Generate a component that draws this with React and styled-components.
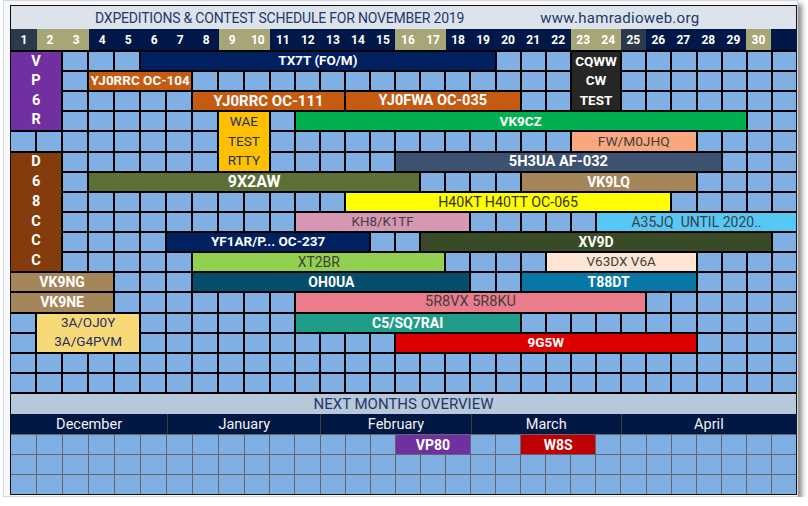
import React from 'react';
import styled, { createGlobalStyle } from 'styled-components';

const GlobalStyle = createGlobalStyle`
  html, body {
    margin: 0;
    padding: 0;
    background: #ffffff;
  }
  body {
    font-family: Roboto, "Liberation Sans", sans-serif;
  }
`;

// 9 wider day columns, then 22 narrower ones (as in the original sheet)
const COLS = 'repeat(9, 26fr) repeat(22, 25fr)';
const ROWS = 17;

const Card = styled.div`
  width: 795px;
  height: 497px;
  margin-left: 3px;
  box-sizing: border-box;
  padding: 4px 0 0 6px;
  background: #f6f7fb;
  border: 1px solid #d4d8e0;
  box-shadow: 4px 4px 5px rgba(0, 0, 0, 0.45);
`;

const Table = styled.div`
  width: 785px;
  display: flex;
  flex-direction: column;
  border: 1px solid #111;
`;

const TitleBar = styled.div`
  height: 23px;
  display: flex;
  align-items: center;
  gap: 76px;
  padding-left: 84px;
  background: #dce3eb;
  color: #1f386a;
`;

const Title = styled.span`
  font-size: 14px;
  letter-spacing: -0.2px;
`;

const Url = styled.span`
  font-size: 15px;
  letter-spacing: 0.3px;
`;

const DayHeader = styled.div`
  display: grid;
  grid-template-columns: ${COLS};
  height: 21px;
`;

const dayBg = { week: '#001848', weekend: '#a7a677', slate: '#2a394b' };

const DayCell = styled.div`
  display: flex;
  align-items: center;
  justify-content: center;
  background: ${({ $kind }) => dayBg[$kind]};
  color: #fff;
  font-size: 12px;
  font-weight: 700;
`;

const Schedule = styled.div`
  display: grid;
  grid-template-columns: ${COLS};
  grid-template-rows: repeat(${ROWS}, 1fr);
  gap: 2px;
  padding: 2px 0;
  height: 344px;
  box-sizing: border-box;
  background: #000;
`;

const Cell = styled.div`
  background: #80b0e3;
`;

const Event = styled.div`
  grid-column: ${({ $col }) => $col} / span ${({ $span }) => $span};
  grid-row: ${({ $row }) => $row} / span ${({ $rows }) => $rows || 1};
  display: grid;
  grid-auto-rows: 1fr;
  align-items: center;
  justify-items: center;
  background: ${({ $bg }) => $bg};
  color: ${({ $fg }) => $fg || '#fff'};
  font-size: ${({ $size }) => $size || 14}px;
  font-weight: ${({ $fg }) => ($fg ? 400 : 700)};
  white-space: pre;
  line-height: 1;
  overflow: hidden;
`;

const BandTitle = styled.div`
  height: 20px;
  display: flex;
  align-items: center;
  justify-content: center;
  background: #b8c7d9;
  color: #1f386a;
  font-size: 15px;
`;

const MonthHeader = styled.div`
  display: grid;
  grid-template-columns: ${COLS};
  height: 20px;
  background: #001843;
`;

const Month = styled.div`
  grid-column: span ${({ $span }) => $span};
  display: flex;
  align-items: center;
  justify-content: center;
  color: #f2f2f2;
  font-size: 14.5px;
  border-left: ${({ $first }) => ($first ? 'none' : '1px solid #3a3a3a')};
`;

const Overview = styled.div`
  display: grid;
  grid-template-columns: ${COLS};
  grid-template-rows: repeat(3, 19px);
  gap: 1px;
  padding-top: 1px;
  background: #666;
`;

const days = Array.from({ length: 31 }, (_, i) => {
  const d = i + 1;
  let kind = 'week';
  if ([2, 3, 9, 10, 16, 17, 23, 24, 30].includes(d)) kind = 'weekend';
  if (d === 1 || d === 25) kind = 'slate';
  return { d, kind, label: d <= 30 ? String(d) : '' };
});

const NAVY_TEXT = '#1f3060';
const GREY_TEXT = '#404040';

const events = [
  { row: 1, rows: 4, col: 1, span: 2, bg: '#7030a0', lines: ['V', 'P', '6', 'R'], size: 14.5 },
  { row: 6, rows: 6, col: 1, span: 2, bg: '#843c0c', lines: ['D', '6', '8', 'C', 'C', 'C'], size: 14.5 },
  { row: 12, col: 1, span: 4, bg: '#a5855a', lines: ['VK9NG'] },
  { row: 13, col: 1, span: 4, bg: '#a5855a', lines: ['VK9NE'] },
  { row: 14, rows: 2, col: 2, span: 4, bg: '#f7d978', fg: NAVY_TEXT, lines: ['3A/OJ0Y', '3A/G4PVM'], size: 13.5 },
  { row: 1, col: 6, span: 14, bg: '#002060', lines: ['TX7T (FO/M)'], size: 13.5 },
  { row: 1, rows: 3, col: 23, span: 2, bg: '#262626', lines: ['CQWW', 'CW', 'TEST'], size: 13.5 },
  { row: 2, col: 4, span: 4, bg: '#c55a11', lines: ['YJ0RRC OC-104'], size: 13.5 },
  { row: 3, col: 8, span: 6, bg: '#c55a11', lines: ['YJ0RRC OC-111'], size: 15 },
  { row: 3, col: 14, span: 7, bg: '#c55a11', lines: ['YJ0FWA OC-035'], size: 14.5 },
  { row: 4, rows: 3, col: 9, span: 2, bg: '#ffc000', fg: NAVY_TEXT, lines: ['WAE', 'TEST', 'RTTY'], size: 13.5 },
  { row: 4, col: 12, span: 18, bg: '#00b050', lines: ['VK9CZ'], size: 13.5 },
  { row: 5, col: 23, span: 5, bg: '#f8a77e', fg: GREY_TEXT, lines: ['FW/M0JHQ'], size: 13.7 },
  { row: 6, col: 16, span: 13, bg: '#3d5270', lines: ['5H3UA AF-032'], size: 14.7 },
  { row: 7, col: 4, span: 13, bg: '#5b6f37', lines: ['9X2AW'], size: 16 },
  { row: 7, col: 21, span: 7, bg: '#a5855a', lines: ['VK9LQ'] },
  { row: 8, col: 14, span: 13, bg: '#ffff00', fg: '#333', lines: ['H40KT H40TT OC-065'], size: 14.2 },
  { row: 9, col: 12, span: 7, bg: '#d597b1', fg: GREY_TEXT, lines: ['KH8/K1TF'], size: 13.3 },
  { row: 9, col: 24, span: 8, bg: '#56c8f6', fg: GREY_TEXT, lines: ['A35JQ  UNTIL 2020..'] },
  { row: 10, col: 7, span: 8, bg: '#002060', lines: ['YF1AR/P... OC-237'], size: 13.5 },
  { row: 10, col: 17, span: 14, bg: '#384a26', lines: ['XV9D'] },
  { row: 11, col: 8, span: 10, bg: '#92d050', fg: GREY_TEXT, lines: ['XT2BR'] },
  { row: 11, col: 22, span: 6, bg: '#fde4d3', fg: GREY_TEXT, lines: ['V63DX V6A'], size: 13.5 },
  { row: 12, col: 8, span: 11, bg: '#064d6b', lines: ['OH0UA'] },
  { row: 12, col: 21, span: 7, bg: '#0777a6', lines: ['T88DT'] },
  { row: 13, col: 12, span: 14, bg: '#ea7c8c', fg: GREY_TEXT, lines: ['5R8VX 5R8KU'], size: 14.5 },
  { row: 14, col: 12, span: 9, bg: '#1f9d88', lines: ['C5/SQ7RAI'] },
  { row: 15, col: 16, span: 12, bg: '#dd0000', lines: ['9G5W'], size: 13.5 },
];

const months = [
  { name: 'December', span: 6 },
  { name: 'January', span: 6 },
  { name: 'February', span: 6 },
  { name: 'March', span: 6 },
  { name: 'April', span: 7 },
];

const outlook = [
  { row: 1, col: 16, span: 3, bg: '#7030a0', lines: ['VP80'] },
  { row: 1, col: 21, span: 3, bg: '#c00000', lines: ['W8S'] },
];

// blue cells fill whatever the events leave free (auto placement)
const freeCells = (list, rows) =>
  31 * rows - list.reduce((n, e) => n + e.span * (e.rows || 1), 0);

const renderEvent = (e, i) => (
  <Event
    key={i}
    $row={e.row}
    $rows={e.rows}
    $col={e.col}
    $span={e.span}
    $bg={e.bg}
    $fg={e.fg}
    $size={e.size}
  >
    {e.lines.map((l, j) => (
      <span key={j}>{l}</span>
    ))}
  </Event>
);

export default function App() {
  return (
    <>
      <GlobalStyle />
      <Card>
        <Table>
          <TitleBar>
            <Title>DXPEDITIONS &amp; CONTEST SCHEDULE FOR NOVEMBER 2019</Title>
            <Url>www.hamradioweb.org</Url>
          </TitleBar>

          <DayHeader>
            {days.map((d) => (
              <DayCell key={d.d} $kind={d.kind}>
                {d.label}
              </DayCell>
            ))}
          </DayHeader>

          <Schedule>
            {events.map(renderEvent)}
            {Array.from({ length: freeCells(events, ROWS) }, (_, i) => (
              <Cell key={`c${i}`} />
            ))}
          </Schedule>

          <BandTitle>NEXT MONTHS OVERVIEW</BandTitle>

          <MonthHeader>
            {months.map((m, i) => (
              <Month key={m.name} $span={m.span} $first={i === 0}>
                {m.name}
              </Month>
            ))}
          </MonthHeader>

          <Overview>
            {outlook.map(renderEvent)}
            {Array.from({ length: freeCells(outlook, 3) }, (_, i) => (
              <Cell key={`o${i}`} />
            ))}
          </Overview>
        </Table>
      </Card>
    </>
  );
}
